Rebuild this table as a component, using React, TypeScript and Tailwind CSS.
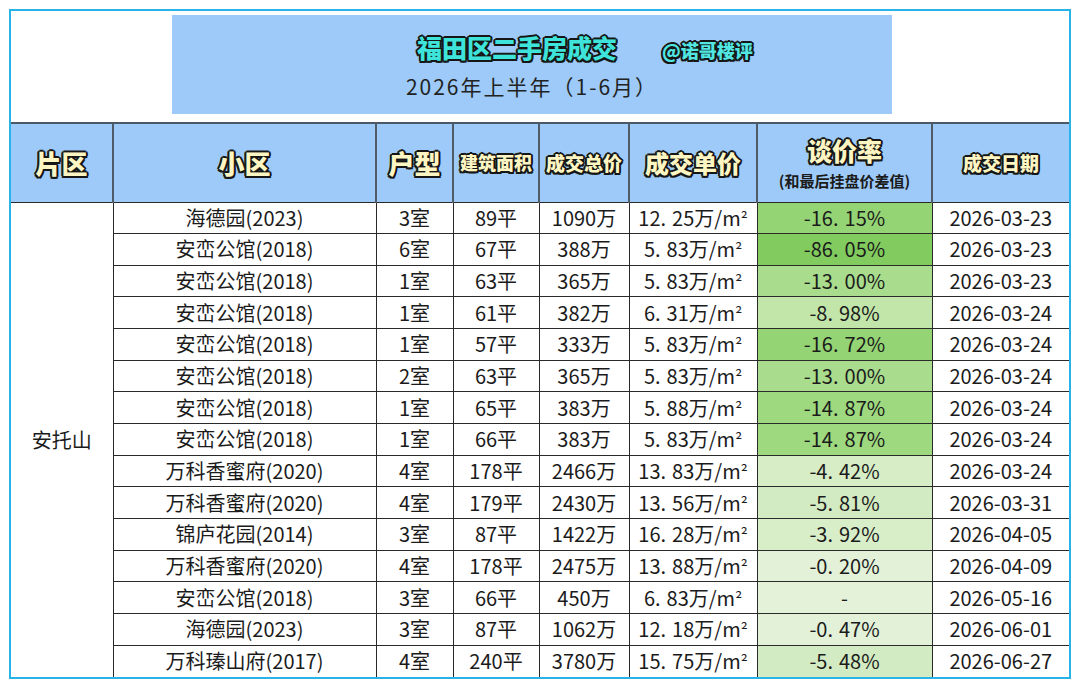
const rows = [
  { name: "海德园(2023)", room: "3室", area: "89平", total: "1090万", unit: "12.25", rate: "-16.15%", bg: "bg-[#95d474]", date: "2026-03-23" },
  { name: "安峦公馆(2018)", room: "6室", area: "67平", total: "388万", unit: "5.83", rate: "-86.05%", bg: "bg-[#82cb5e]", date: "2026-03-23" },
  { name: "安峦公馆(2018)", room: "1室", area: "63平", total: "365万", unit: "5.83", rate: "-13.00%", bg: "bg-[#a9dc8c]", date: "2026-03-23" },
  { name: "安峦公馆(2018)", room: "1室", area: "61平", total: "382万", unit: "6.31", rate: "-8.98%", bg: "bg-[#c2e6aa]", date: "2026-03-24" },
  { name: "安峦公馆(2018)", room: "1室", area: "57平", total: "333万", unit: "5.83", rate: "-16.72%", bg: "bg-[#95d474]", date: "2026-03-24" },
  { name: "安峦公馆(2018)", room: "2室", area: "63平", total: "365万", unit: "5.83", rate: "-13.00%", bg: "bg-[#a9dc8c]", date: "2026-03-24" },
  { name: "安峦公馆(2018)", room: "1室", area: "65平", total: "383万", unit: "5.88", rate: "-14.87%", bg: "bg-[#9ed87f]", date: "2026-03-24" },
  { name: "安峦公馆(2018)", room: "1室", area: "66平", total: "383万", unit: "5.83", rate: "-14.87%", bg: "bg-[#9ed87f]", date: "2026-03-24" },
  { name: "万科香蜜府(2020)", room: "4室", area: "178平", total: "2466万", unit: "13.83", rate: "-4.42%", bg: "bg-[#d6edc6]", date: "2026-03-24" },
  { name: "万科香蜜府(2020)", room: "4室", area: "179平", total: "2430万", unit: "13.56", rate: "-5.81%", bg: "bg-[#d3ebc2]", date: "2026-03-31" },
  { name: "锦庐花园(2014)", room: "3室", area: "87平", total: "1422万", unit: "16.28", rate: "-3.92%", bg: "bg-[#d8eec9]", date: "2026-04-05" },
  { name: "万科香蜜府(2020)", room: "4室", area: "178平", total: "2475万", unit: "13.88", rate: "-0.20%", bg: "bg-[#e2f1d8]", date: "2026-04-09" },
  { name: "安峦公馆(2018)", room: "3室", area: "66平", total: "450万", unit: "6.83", rate: "-", bg: "bg-[#e4f2da]", date: "2026-05-16" },
  { name: "海德园(2023)", room: "3室", area: "87平", total: "1062万", unit: "12.18", rate: "-0.47%", bg: "bg-[#e2f1d8]", date: "2026-06-01" },
  { name: "万科瑧山府(2017)", room: "4室", area: "240平", total: "3780万", unit: "15.75", rate: "-5.48%", bg: "bg-[#d3ebc2]", date: "2026-06-27" },
];

const outline =
  "[text-shadow:2px_0_0_#161616,-2px_0_0_#161616,0_2px_0_#161616,0_-2px_0_#161616,1.5px_1.5px_0_#161616,-1.5px_-1.5px_0_#161616,1.5px_-1.5px_0_#161616,-1.5px_1.5px_0_#161616]";

// wide decimal point like the spreadsheet font
function Dotted({ text }: { text: string }) {
  const [a, b] = text.split(".");
  if (b === undefined) return <>{text}</>;
  return (
    <>
      {a}
      <span className="mr-[6px]">.</span>
      {b}
    </>
  );
}

const th = "border-r-2 border-[#4f5c68] p-0 align-middle font-black text-[#fef6c2] " + outline;
const td = "h-[31.67px] border-r border-b border-[#2a2a2a] p-0 text-center align-middle";

export default function App() {
  return (
    <div className="min-h-[688px] bg-white pt-[9px] pl-[9px] font-['Noto_Sans_CJK_SC',sans-serif] text-[#1b1b1b]">
      <div className="w-[1062px] border-2 border-[#2ab3e6] bg-white">
        <div className="h-[113px] border-b-2 border-[#4b5866] pt-[4px]">
          <div className="ml-[161px] flex h-[99px] w-[720px] flex-col bg-[#9dcaf8]">
            <div className="flex items-end pl-[245px] pt-[17px]">
              <span className={"text-[25px] leading-[30px] font-black text-[#3ee4da] " + outline}>福田区二手房成交</span>
              <span className={"ml-[45px] text-[18px] leading-[24px] font-black text-[#52e6e2] " + outline}>@诺哥楼评</span>
            </div>
            <div className="mt-[11px] text-center text-[21px] leading-[26px] tracking-[2px] text-[#222]">2026年上半年（1-6月）</div>
          </div>
        </div>
        <table className="w-[1058px] table-fixed border-collapse">
          <colgroup>
            <col className="w-[102px]" />
            <col className="w-[263px]" />
            <col className="w-[77px]" />
            <col className="w-[86px]" />
            <col className="w-[90px]" />
            <col className="w-[128px]" />
            <col className="w-[175px]" />
            <col className="w-[137px]" />
          </colgroup>
          <thead>
            <tr className="h-[78px] border-b border-[#2a2a2a] bg-[#9dcaf8]">
              <th className={th + " text-[26px]"}>片区</th>
              <th className={th + " text-[26px]"}>小区</th>
              <th className={th + " text-[26px]"}>户型</th>
              <th className={th + " text-[18px]"}>建筑面积</th>
              <th className={th + " text-[19px]"}>成交总价</th>
              <th className={th + " text-[24px]"}>成交单价</th>
              <th className="border-r-2 border-[#4f5c68] p-0 align-middle">
                <div className={"text-[25px] leading-[32px] font-black text-[#fef6c2] " + outline}>谈价率</div>
                <div className="mt-[5px] text-[15px] leading-[20px] font-bold text-[#1b1b1b]">(和最后挂盘价差值)</div>
              </th>
              <th className={"p-0 align-middle text-[19px] font-black text-[#fef6c2] " + outline}>成交日期</th>
            </tr>
          </thead>
          <tbody className="text-[20px] leading-none">
            {rows.map((r, i) => {
              const last = i === rows.length - 1;
              const cell = last ? td.replace(" border-b", "") : td;
              return (
                <tr key={i}>
                  {i === 0 && (
                    <td rowSpan={rows.length} className="border-r border-[#2a2a2a] p-0 text-center align-middle text-[20px]">
                      安托山
                    </td>
                  )}
                  <td className={cell}>{r.name}</td>
                  <td className={cell}>{r.room}</td>
                  <td className={cell}>{r.area}</td>
                  <td className={cell}>{r.total}</td>
                  <td className={cell}>
                    <Dotted text={r.unit} />万/m<span className="text-[17px]">²</span>
                  </td>
                  <td className={cell + " " + r.bg}>
                    <Dotted text={r.rate} />
                  </td>
                  <td className={cell.replace("border-r ", "")}>{r.date}</td>
                </tr>
              );
            })}
          </tbody>
        </table>
      </div>
    </div>
  );
}
